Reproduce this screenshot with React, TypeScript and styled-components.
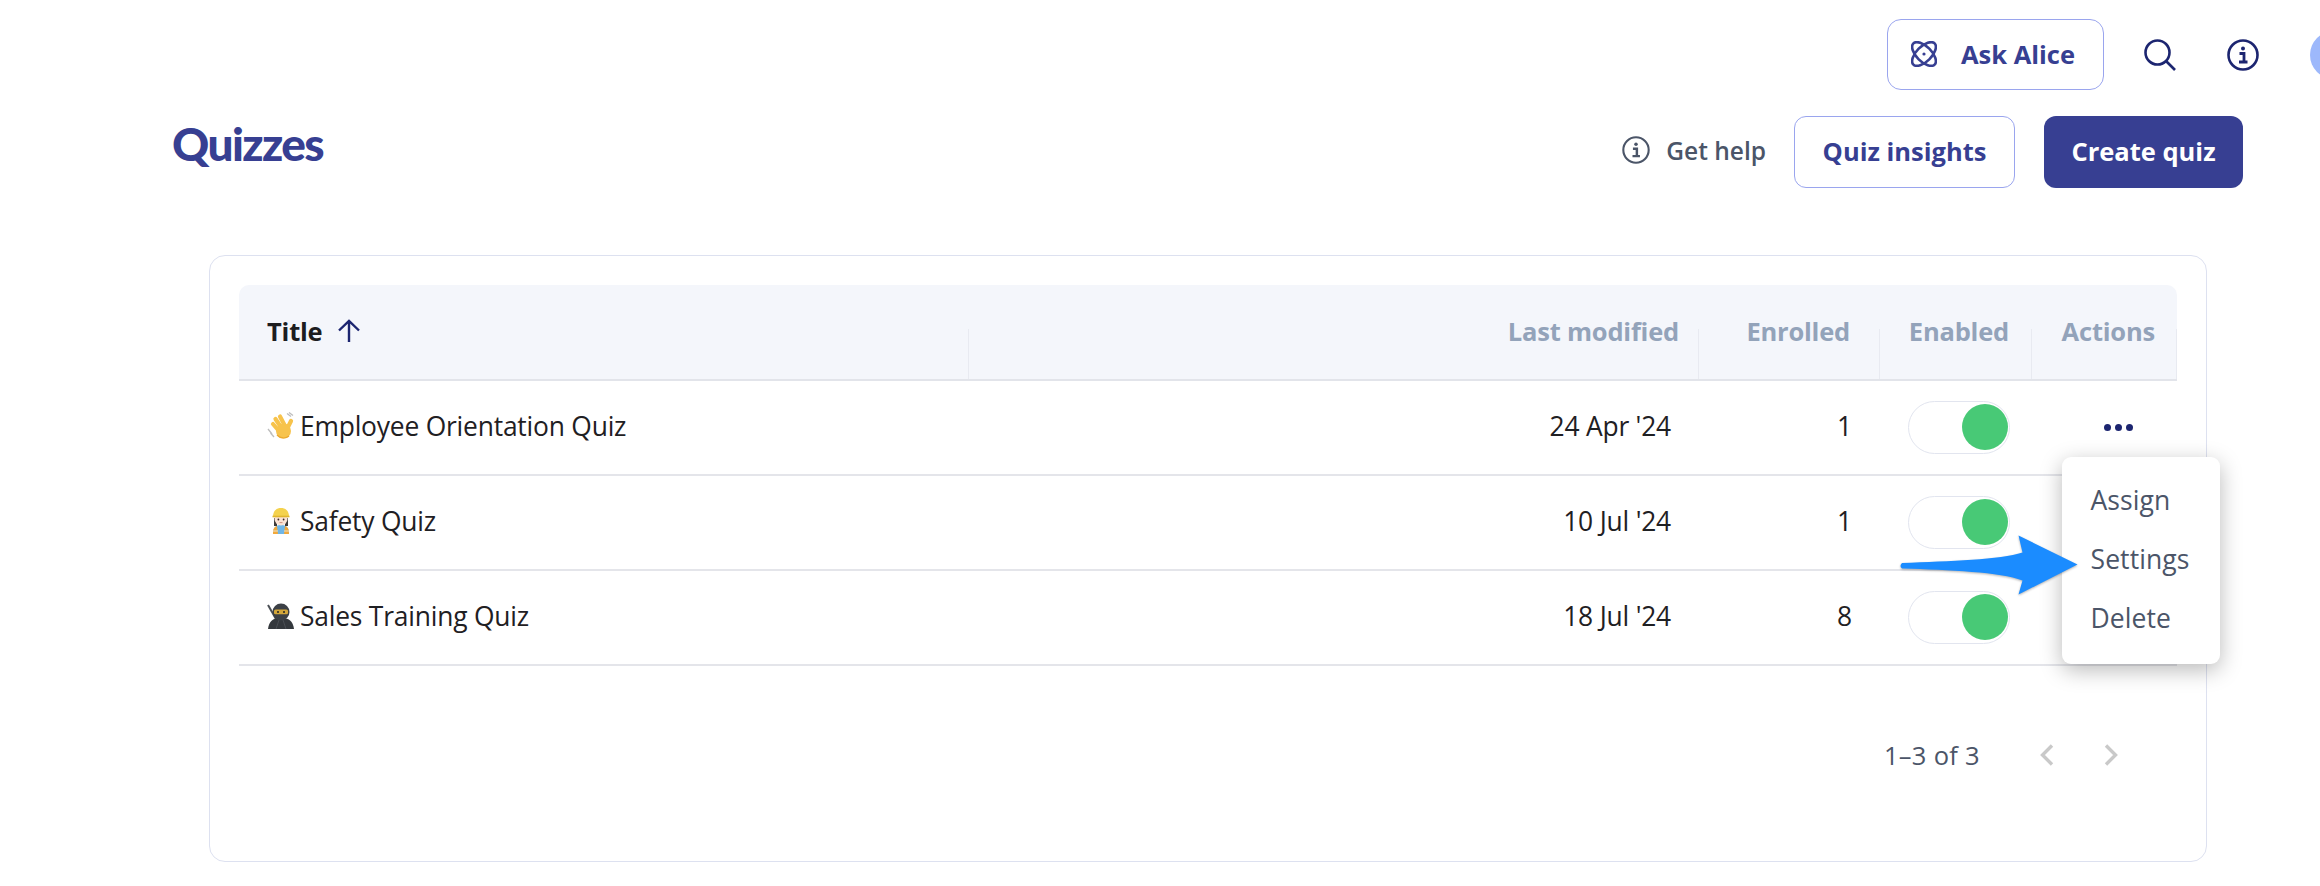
import React from 'react';
import styled, { createGlobalStyle } from 'styled-components';

const Global = createGlobalStyle`
  html, body { margin: 0; padding: 0; background: #fff; width: 2320px; height: 886px; overflow: hidden; }
  * { box-sizing: border-box; }
  body { font-family: "Open Sans", "Noto Sans", sans-serif; }
`;

const Page = styled.div`
  width: 2320px;
  height: 886px;
  overflow: hidden;
  position: relative;
  display: flex;
  flex-direction: column;
`;

const TopBar = styled.header`
  display: flex;
  justify-content: flex-end;
  align-items: center;
  height: 71px;
  margin-top: 19px;
  gap: 40px;
`;

const OutlineButton = styled.button`
  display: inline-flex;
  align-items: center;
  justify-content: center;
  background: #fff;
  border: 1.5px solid #9aa5ee;
  color: #373f92;
  font-family: inherit;
  font-weight: 700;
  font-size: 25.5px;
  padding: 0 0 2px;
`;

const AskButton = styled(OutlineButton)`
  width: 217px;
  height: 71px;
  border-radius: 14px;
  gap: 24px;
  padding: 0 5px 2px 0;
`;

const IconBtn = styled.span<{ $shift?: number }>`
  display: flex;
  width: 32px;
  height: 32px;
  margin-left: ${p => p.$shift ?? 0}px;
  color: #1c2570;
`;

const Avatar = styled.div`
  width: 48px;
  height: 48px;
  border-radius: 50%;
  background: #9db8fb;
  margin-right: -38px;
  margin-left: 11px;
`;

const HeadRow = styled.div`
  display: flex;
  align-items: center;
  justify-content: space-between;
  height: 72px;
  margin-top: 26px;
  padding: 0 77px 0 172px;
`;

const PageTitle = styled.h1`
  margin: -16px 0 0;
  font-family: "Lato", sans-serif;
  font-weight: 900;
  font-size: 46px;
  letter-spacing: -1.6px;
  color: #373f92;
  line-height: 1;
`;

const HeadActions = styled.div`
  display: flex;
  align-items: center;
`;

const Help = styled.span`
  display: inline-flex;
  align-items: center;
  gap: 16px;
  font-size: 24.5px;
  font-weight: 600;
  color: #4b5568;
  margin-right: 28px;
  margin-top: -4px;
`;

const InsightsButton = styled(OutlineButton)`
  width: 221px;
  height: 72px;
  border-radius: 12px;
  margin-right: 29px;
`;

const CreateButton = styled.button`
  width: 199px;
  height: 72px;
  border: none;
  border-radius: 12px;
  padding: 0 0 2px;
  background: #373f92;
  color: #fff;
  font-family: inherit;
  font-weight: 700;
  font-size: 25.5px;
`;

const Card = styled.section`
  position: relative;
  width: 1998px;
  height: 607px;
  margin: 67px 0 0 209px;
  padding: 29px 29px 0;
  border: 1.5px solid #dde1f0;
  border-radius: 16px;
`;

const Grid = styled.div`
  display: grid;
  grid-template-columns: 730px 730px 181px 152px 145px;
  width: 1938px;
`;

const HeadCell = styled.div<{ $align?: string; $pad?: number; $active?: boolean }>`
  height: 96px;
  background: #f4f6fb;
  border-bottom: 2px solid #e2e4ea;
  position: relative;
  display: flex;
  align-items: center;
  justify-content: ${p => p.$align ?? 'flex-end'};
  padding: 0 ${p => p.$pad ?? 20}px 3px 28px;
  font-size: 25.5px;
  font-weight: 700;
  letter-spacing: -0.2px;
  color: ${p => (p.$active ? '#1d1d1f' : '#93a3ba')};
  &:first-child { border-top-left-radius: 10px; }
  &:nth-child(5) { border-top-right-radius: 10px; }
  &::after { content: ""; position: absolute; right: 0; bottom: 0; top: 44px; width: 1.5px; background: #e8eaf1; }
`;

const SortIcon = styled.span`
  display: flex;
  margin-left: 16px;
  color: #1c2570;
`;

const Cell = styled.div<{ $align?: string; $pad?: number; $raise?: number }>`
  height: 95px;
  border-bottom: 2px solid #e4e5ea;
  display: flex;
  align-items: center;
  justify-content: ${p => p.$align ?? 'flex-end'};
  padding: 0 ${p => p.$pad ?? 28}px ${p => p.$raise ?? 4}px 28px;
  font-size: 26.4px;
  font-weight: 500;
  color: #1f2023;
  letter-spacing: -0.2px;
`;

const Emoji = styled.svg`
  width: 28px;
  height: 28px;
  margin-right: 5px;
  flex: none;
`;

const ToggleTrack = styled.span`
  width: 102px;
  height: 53px;
  border: 1.5px solid #e2e5ef;
  border-radius: 27px;
  display: flex;
  align-items: center;
  justify-content: flex-end;
  padding-right: 1.5px;
  background: #fff;
`;

const ToggleThumb = styled.span`
  width: 46px;
  height: 46px;
  border-radius: 50%;
  background: #48c976;
`;

const Dots = styled.span`
  display: flex;
  gap: 4px;
  margin: 0 auto;
`;

const Dot = styled.i`
  width: 7px;
  height: 7px;
  border-radius: 50%;
  background: #1c2570;
`;

const Pager = styled.div`
  display: flex;
  align-items: center;
  justify-content: flex-end;
  width: 1938px;
  height: 60px;
  margin-top: 59px;
  padding-right: 45px;
  font-size: 25.5px;
  letter-spacing: 0.3px;
  color: #4b5568;
`;

const PagerText = styled.span`
  margin-right: 60px;
`;

const PagerIcon = styled.span`
  display: flex;
  width: 28px;
  margin-right: 36px;
  color: #c9c9c9;
  &:last-child { margin-right: 0; }
`;

const Menu = styled.ul`
  position: absolute;
  left: 1851.5px;
  top: 200.5px;
  width: 158px;
  height: 207px;
  margin: 0;
  padding: 14px 0 0 29px;
  list-style: none;
  background: #fff;
  border-radius: 9px;
  box-shadow: 0 6px 22px rgba(0, 0, 0, 0.28);
  font-size: 26.5px;
  letter-spacing: 0.1px;
  color: #4b5568;
`;

const MenuItem = styled.li`
  height: 59px;
  display: flex;
  align-items: center;
`;

const Arrow = styled.svg`
  position: absolute;
  left: 1690px;
  top: 278px;
  width: 190px;
  height: 66px;
  overflow: visible;
`;

const ArrowShape = styled.path`
  fill: #1b8cff;
  filter: drop-shadow(0 1px 1px rgba(0, 0, 0, 0.3));
`;

const AtomIcon = () => (
  <svg width="26" height="26" viewBox="0 0 26 26" fill="none" stroke="currentColor" strokeWidth="2.6">
    <ellipse cx="13" cy="13" rx="15" ry="7.5" transform="rotate(45 13 13)" />
    <ellipse cx="13" cy="13" rx="15" ry="7.5" transform="rotate(-45 13 13)" />
    <circle cx="13" cy="13" r="1.6" fill="currentColor" stroke="none" />
  </svg>
);

const SearchIcon = () => (
  <svg width="32" height="32" viewBox="0 0 32 32" fill="none" stroke="currentColor" strokeWidth="2.6">
    <circle cx="13.5" cy="13.5" r="12" />
    <path d="M22.5 22.5 L31 31" />
  </svg>
);

const InfoIcon = ({ size = 32, sw = 2.6 }: { size?: number; sw?: number }) => (
  <svg width={size} height={size} viewBox="0 0 32 32" fill="none" stroke="currentColor" strokeWidth={sw}>
    <circle cx="16" cy="16" r="14.5" />
    <circle cx="16" cy="9.5" r="2" fill="currentColor" stroke="none" />
    <path d="M12.5 14.5 H17 V22.5 M12 23 H20.5" strokeWidth="2.8" />
  </svg>
);

const ArrowUp = () => (
  <svg width="22" height="24" viewBox="0 0 22 24" fill="none" stroke="currentColor" strokeWidth="2.4">
    <path d="M11 23 V2 M1 11.5 L11 1.8 L21 11.5" />
  </svg>
);

const Wave = () => (
  <Emoji viewBox="0 0 28 28">
    <path d="M1 17 L5 22 M3.5 21 L7 25 M20 1.5 L24 4.5 M22 0.5 L26 3.5" stroke="#bdbdbd" strokeWidth="1.3" fill="none" />
    <g stroke="#f7c34c" strokeWidth="4.2" strokeLinecap="round" fill="none">
      <path d="M6 12 L12 19" />
      <path d="M8.5 7 L14.5 16" />
      <path d="M13 4.5 L18 14" />
      <path d="M24 9 L20 17" />
    </g>
    <circle cx="16.5" cy="19" r="7.5" fill="#f7c34c" />
    <path d="M10 23 C13 26.5 19 27 22 24" stroke="#eba92f" strokeWidth="1.2" fill="none" />
  </Emoji>
);

const Worker = () => (
  <Emoji viewBox="0 0 28 28">
    <path d="M6 27 C6 20 9 18 14 18 C19 18 22 20 22 27 Z" fill="#6fb6e8" />
    <path d="M6 27 C6 22 7 20 10 19 L11 27 Z M22 27 C22 22 21 20 18 19 L17 27 Z" fill="#f2a93b" />
    <path d="M6 24 H11 M17 24 H22" stroke="#e9e4d0" strokeWidth="1.2" />
    <path d="M7 11 L7 19 L10 19 L10 11 Z M21 11 L21 19 L18 19 L18 11 Z" fill="#3e3a38" />
    <circle cx="14" cy="12" r="6.5" fill="#fbe3d4" />
    <circle cx="11.4" cy="12.5" r="0.9" fill="#3b2a25" />
    <circle cx="16.6" cy="12.5" r="0.9" fill="#3b2a25" />
    <path d="M12.5 15.6 H15.5" stroke="#c98a78" strokeWidth="0.9" />
    <path d="M6 10 C6 3 10 1 14 1 C18 1 22 3 22 10 Z" fill="#f4d24d" />
    <path d="M5.5 9.5 H22.5" stroke="#dfb52d" strokeWidth="1.6" />
  </Emoji>
);

const Ninja = () => (
  <Emoji viewBox="0 0 28 28">
    <path d="M1 3 L9 17" stroke="#4b4f55" strokeWidth="2" />
    <path d="M1 27 C2 19 6 16 14 16 C22 16 26 19 27 27 Z" fill="#34383d" />
    <circle cx="14" cy="10" r="8.5" fill="#3c4046" />
    <rect x="7" y="7.5" width="14" height="4.8" rx="1.6" fill="#d3a63a" />
    <circle cx="11" cy="10" r="1" fill="#222" />
    <circle cx="17" cy="10" r="1" fill="#222" />
    <path d="M9 27 L12 18 M19 27 L16 18" stroke="#4a4e54" strokeWidth="1" />
  </Emoji>
);

const ChevronLeft = () => (
  <svg width="14" height="22" viewBox="0 0 14 22" fill="none" stroke="currentColor" strokeWidth="3.4">
    <path d="M12 1.5 L2.5 11 L12 20.5" />
  </svg>
);

const ChevronRight = () => (
  <svg width="14" height="22" viewBox="0 0 14 22" fill="none" stroke="currentColor" strokeWidth="3.4">
    <path d="M2 1.5 L11.5 11 L2 20.5" />
  </svg>
);

const rows = [
  { icon: <Wave />, title: 'Employee Orientation Quiz', date: "24 Apr '24", enrolled: 1 },
  { icon: <Worker />, title: 'Safety Quiz', date: "10 Jul '24", enrolled: 1 },
  { icon: <Ninja />, title: 'Sales Training Quiz', date: "18 Jul '24", enrolled: 8 },
];

export default function App() {
  return (
    <Page>
      <Global />
      <TopBar>
        <AskButton><AtomIcon />Ask Alice</AskButton>
        <IconBtn><SearchIcon /></IconBtn>
        <IconBtn $shift={11}><InfoIcon /></IconBtn>
        <Avatar />
      </TopBar>
      <HeadRow>
        <PageTitle>Quizzes</PageTitle>
        <HeadActions>
          <Help><InfoIcon size={28} sw={2.4} />Get help</Help>
          <InsightsButton>Quiz insights</InsightsButton>
          <CreateButton>Create quiz</CreateButton>
        </HeadActions>
      </HeadRow>
      <Card>
        <Grid>
          <HeadCell $align="flex-start" $active>Title<SortIcon><ArrowUp /></SortIcon></HeadCell>
          <HeadCell>Last modified</HeadCell>
          <HeadCell $pad={30}>Enrolled</HeadCell>
          <HeadCell $pad={23}>Enabled</HeadCell>
          <HeadCell $pad={22}>Actions</HeadCell>
          {rows.map(r => (
            <React.Fragment key={r.title}>
              <Cell $align="flex-start">{r.icon}{r.title}</Cell>
              <Cell>{r.date}</Cell>
              <Cell>{r.enrolled}</Cell>
              <Cell $align="flex-start" $pad={0} $raise={1}><ToggleTrack><ToggleThumb /></ToggleTrack></Cell>
              <Cell $align="center" $pad={0} $raise={1}><Dots><Dot /><Dot /><Dot /></Dots></Cell>
            </React.Fragment>
          ))}
        </Grid>
        <Pager>
          <PagerText>1–3 of 3</PagerText>
          <PagerIcon><ChevronLeft /></PagerIcon>
          <PagerIcon><ChevronRight /></PagerIcon>
        </Pager>
        <Menu>
          <MenuItem>Assign</MenuItem>
          <MenuItem>Settings</MenuItem>
          <MenuItem>Delete</MenuItem>
        </Menu>
        <Arrow viewBox="0 0 190 66">
          <ArrowShape d="M2 29 C50 27 100 26 122.5 18.5 L118.5 1.5 L177.5 30.5 L118.5 60.5 L122.5 46.5 C100 38 50 36 2 34.5 Q-1 32 2 29 Z" />
        </Arrow>
      </Card>
    </Page>
  );
}
